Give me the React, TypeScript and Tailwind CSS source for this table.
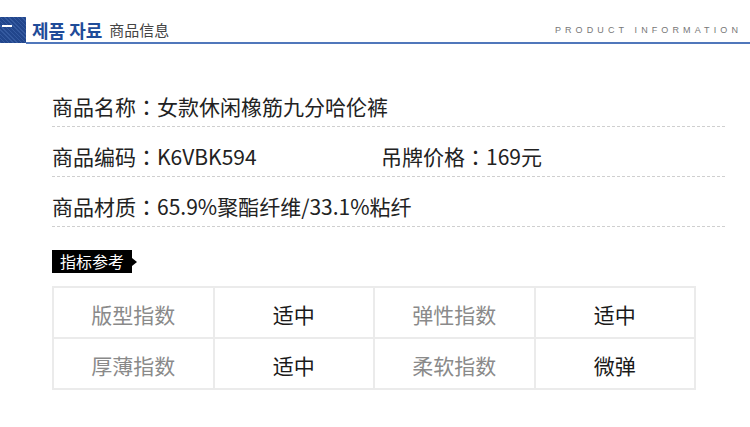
import React from 'react';

const cjk = "font-['Noto_Sans_CJK_SC','Noto_Sans',sans-serif]";

// 전각 콜론 (가운데 정렬)
const Colon = () => <span className="font-['Noto_Sans_CJK_TC',sans-serif]">：</span>;

// 상품 기본 정보 행
const InfoRow = ({ children }: { children: React.ReactNode }) => (
  <div className="w-[673px] h-[50px] pt-[15px] border-b border-dashed border-[#cfcfcf] flex items-start">
    {children}
  </div>
);

const indexes = [
  ['版型指数', '适中', '弹性指数', '适中'],
  ['厚薄指数', '适中', '柔软指数', '微弹'],
];

const App: React.FC = () => {
  return (
    <div className={`w-[750px] h-[427px] bg-white overflow-hidden ${cjk}`}>
      {/* 헤더 */}
      <div className="pt-[17px] flex">
        <div className="w-[26px] h-[26px] pt-[8px] pl-[2px] bg-[repeating-linear-gradient(45deg,#34599f_0px,#34599f_1px,#22468c_1px,#22468c_3px)]">
          <div className="w-[10px] h-[2px] bg-white" />
        </div>
        <div className="flex-1 h-[27px] border-b-2 border-[#5077bb] flex items-center justify-between pl-[6px] pr-[8px]">
          <div className="flex items-center">
            <span className="text-[18px] leading-[24px] font-bold text-[#1f4c99] font-['Noto_Sans_CJK_KR',sans-serif]">제품 자료</span>
            <span className="ml-[7px] text-[15px] leading-[24px] text-[#444]">商品信息</span>
          </div>
          <span className="text-[9px] tracking-[4.1px] text-[#777] font-['Liberation_Sans',sans-serif] pt-[3px]">PRODUCT INFORMATION</span>
        </div>
      </div>

      {/* 상품 정보 */}
      <div className="pl-[52px] pt-[33px] text-[#222] text-[21px] leading-[28px]">
        <InfoRow>
          <span>商品名称<Colon />女款休闲橡筋九分哈伦裤</span>
        </InfoRow>
        <InfoRow>
          <span className="w-[329px]">商品编码<Colon />K6VBK594</span>
          <span>吊牌价格<Colon />169元</span>
        </InfoRow>
        <InfoRow>
          <span>商品材质<Colon />65.9%聚酯纤维/33.1%粘纤</span>
        </InfoRow>

        {/* 지표 태그 */}
        <div className="mt-[23px] flex items-center">
          <div className="h-[23px] w-[80px] bg-black text-white text-[16px] leading-[23px] flex items-center justify-center">
            指标参考
          </div>
          <div className="w-0 h-0 border-y-[4px] border-y-transparent border-l-[5px] border-l-black" />
        </div>

        {/* 지표 테이블 */}
        <div className="mt-[13px] w-[644px] grid grid-cols-4 border-t-2 border-l-2 border-[#ebebeb]">
          {indexes.map((row, r) =>
            row.map((cell, c) => (
              <div
                key={`${r}-${c}`}
                className={`h-[51px] border-r-2 border-b-2 border-[#ebebeb] flex items-center justify-center text-[21px] pt-[2px] ${
                  c % 2 === 0 ? 'text-[#8a8a8a]' : 'text-[#1a1a1a]'
                }`}
              >
                {cell}
              </div>
            ))
          )}
        </div>
      </div>
    </div>
  );
};

export default App;
